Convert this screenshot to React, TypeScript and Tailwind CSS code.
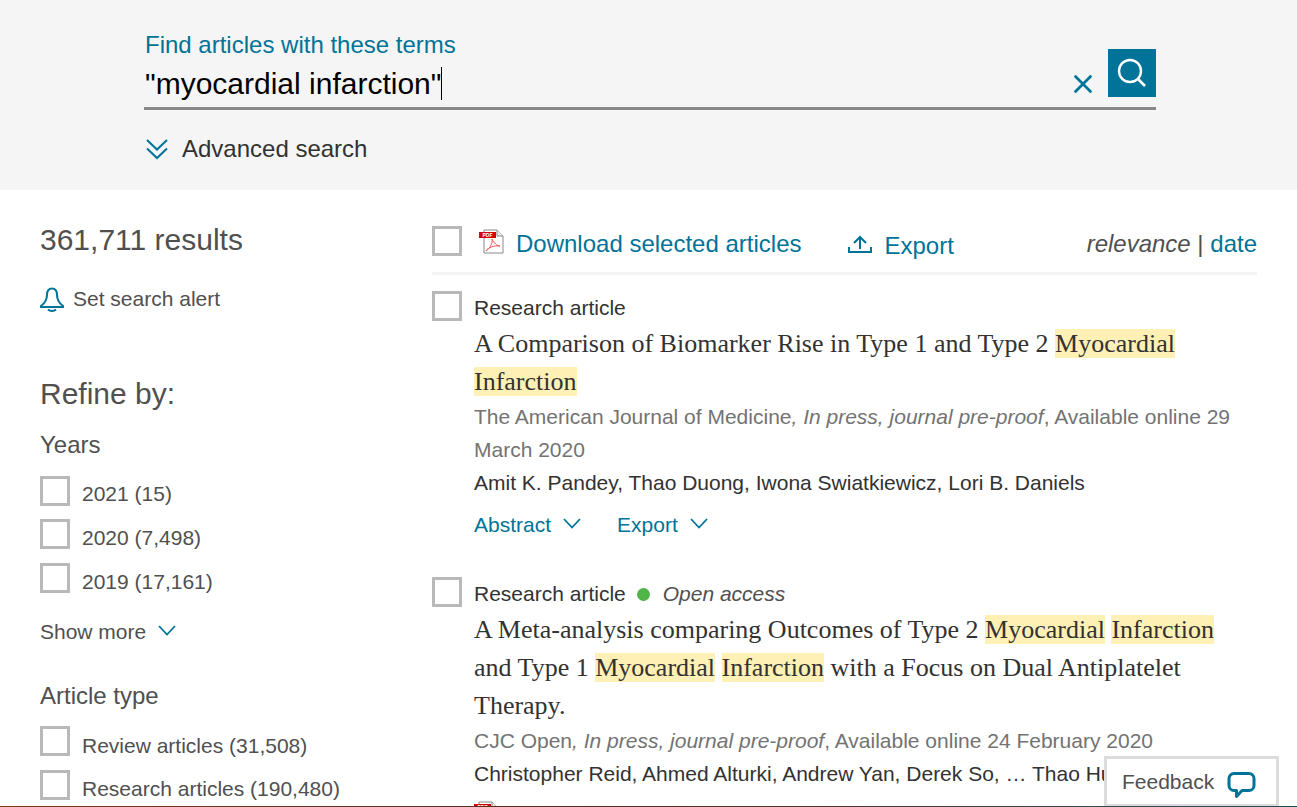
import { X } from 'lucide-react';

const sans = "font-['Liberation_Sans',Arial,sans-serif]";
const serif = "font-['Liberation_Serif','Times_New_Roman',serif]";

function Box({ className = '' }: { className?: string }) {
  return <span className={`block w-[30px] h-[30px] shrink-0 border-[3px] border-[#b9b9b9] bg-white ${className}`} />;
}

function Mark({ children }: { children: string }) {
  return <span className="bg-[#fff0b5]">{children}</span>;
}

function Chevron({ className = '' }: { className?: string }) {
  return (
    <svg viewBox="0 0 18 11" className={`w-[18px] h-[11px] shrink-0 text-[#007398] ${className}`}>
      <path d="M1 1l8 8.5L17 1" fill="none" stroke="currentColor" strokeWidth="1.8" />
    </svg>
  );
}

function PdfIcon({ className = '' }: { className?: string }) {
  return (
    <svg viewBox="0 0 25 25" className={className}>
      <path d="M5 1h13l6 6v17H5z" fill="#fff" stroke="#8a8a8a" strokeWidth="1" />
      <path d="M18 1v6h6" fill="#eee" stroke="#8a8a8a" strokeWidth="1" />
      <rect x="0" y="3" width="17" height="6" fill="#d50000" />
      <text x="8.5" y="8" textAnchor="middle" fontSize="5" fontWeight="700" fill="#fff" fontFamily="Liberation Sans, sans-serif">PDF</text>
      <path d="M13 10c1 5-3 10-6 12 1-3 9-6 14-5-3 0-6-3-8-7z" fill="none" stroke="#f25a5a" strokeWidth="1" />
    </svg>
  );
}

function FilterRow({ label, className = '', textClass = 'mt-[4px]' }: { label: string; className?: string; textClass?: string }) {
  return (
    <div className={`flex items-start h-[30px] ${className}`}>
      <Box />
      <span className={`ml-[12px] text-[21px] leading-[30px] whitespace-nowrap text-[#505050] ${textClass}`}>{label}</span>
    </div>
  );
}

function ToggleLink({ label, className = '' }: { label: string; className?: string }) {
  return (
    <span className={`flex items-center text-[21px] leading-[30px] text-[#007398] ${className}`}>
      {label}
      <Chevron className="ml-[12px] mb-[3px]" />
    </span>
  );
}

export default function App() {
  return (
    <div className={`relative h-[807px] overflow-hidden bg-white ${sans}`}>
      {/* search band */}
      <div className="h-[190px] bg-[#f5f5f5] pl-[144px] pr-[141px] pt-[31px]">
        <div className="text-[24px] leading-[28px] text-[#007398] pl-px">Find articles with these terms</div>
        <div className="flex items-end h-[51px] border-b-[3px] border-[#888888]">
          <span className="text-[30px] leading-[40px] text-black pb-[3px] pl-px">"myocardial infarction"</span>
          <span className="w-px h-[33px] bg-black mb-[7px]" />
          <div className="ml-auto flex items-end">
            <X className="w-[30px] h-[30px] text-[#007398] mb-[8px] mr-[10px]" strokeWidth={2.2} />
            <div className="mb-[10px] w-[48px] h-[48px] bg-[#007398]">
              <svg viewBox="0 0 48 48" className="w-[48px] h-[48px]">
                <circle cx="22" cy="22" r="11" fill="none" stroke="#fff" strokeWidth="2.4" />
                <path d="M30 30l7 7" stroke="#fff" strokeWidth="2.6" />
              </svg>
            </div>
          </div>
        </div>
        <div className="mt-[24px] flex items-center">
          <svg viewBox="0 0 24 22" className="ml-px w-[24px] h-[22px] text-[#007398]">
            <path d="M2 2l10 9.5L22 2M2 10.5l10 9.5 10-9.5" fill="none" stroke="currentColor" strokeWidth="2" />
          </svg>
          <span className="ml-[13px] text-[24px] leading-[30px] text-[#323232]">Advanced search</span>
        </div>
      </div>

      <div className="flex pl-[40px] pr-[40px]">
        {/* refine column */}
        <aside className="w-[392px] shrink-0">
          <div className="mt-[32px] text-[30px] leading-[36px] text-[#505050]">361,711 results</div>
          <div className="mt-[27px] flex items-center">
            <svg viewBox="0 0 24 25" className="w-[24px] h-[25px] text-[#007398]">
              <path d="M7 8C7 3 9 1.5 12 1.5S17 3 17 8c0 5 2 8 6 11v1H1v-1c4-3 6-6 6-11z" fill="none" stroke="currentColor" strokeWidth="2" />
              <path d="M8 22.5c2 2 6 2 8 0" fill="none" stroke="currentColor" strokeWidth="2" />
            </svg>
            <span className="ml-[9px] text-[21px] leading-[28px] text-[#505050]">Set search alert</span>
          </div>
          <div className="mt-[63px] text-[30px] leading-[36px] text-[#505050]">Refine by:</div>
          <div className="mt-[19px] text-[24px] leading-[28px] text-[#505050]">Years</div>
          <FilterRow label="2021 (15)" className="mt-[17px]" textClass="mt-[3px]" />
          <FilterRow label="2020 (7,498)" className="mt-[13px]" />
          <FilterRow label="2019 (17,161)" className="mt-[14px]" />
          <div className="mt-[25px] flex items-center text-[21px] leading-[28px] text-[#505050]">
            Show more
            <Chevron className="ml-[12px] mb-[3px]" />
          </div>
          <div className="mt-[36px] text-[24px] leading-[28px] text-[#505050]">Article type</div>
          <FilterRow label="Review articles (31,508)" className="mt-[16px]" textClass="mt-[5px]" />
          <FilterRow label="Research articles (190,480)" className="mt-[14px]" />
        </aside>

        {/* results column */}
        <main className="flex-1 min-w-0">
          <div className="flex items-start h-[85px] border-b-[3px] border-[#f5f5f5]">
            <Box className="mt-[36px]" />
            <PdfIcon className="ml-[17px] mt-[39px] w-[25px] h-[25px]" />
            <span className="ml-[12px] mt-[39px] text-[24px] leading-[30px] text-[#007398]">Download selected articles</span>
            <svg viewBox="0 0 24 20" className="ml-[47px] mt-[45px] w-[24px] h-[20px] text-[#007398]">
              <path d="M1 12v5h22v-5" fill="none" stroke="currentColor" strokeWidth="2" />
              <path d="M12 14V2M6 8l6-6 6 6" fill="none" stroke="currentColor" strokeWidth="2" />
            </svg>
            <span className="ml-[12px] mt-[41px] text-[24px] leading-[30px] text-[#007398]">Export</span>
            <span className="ml-auto mt-[39px] text-[24px] leading-[30px] text-[#505050]">
              <i>relevance</i> | <span className="text-[#007398]">date</span>
            </span>
          </div>

          <article className="flex mt-[16px]">
            <Box />
            <div className="ml-[12px] min-w-0">
              <div className="mt-[2px] text-[21px] leading-[30px] text-[#323232]">Research article</div>
              <h2 className={`${serif} font-normal mt-[2px] text-[26px] leading-[38px] text-[#323232]`}>
                A Comparison of Biomarker Rise in Type 1 and Type 2 <Mark>Myocardial</Mark> <Mark>Infarction</Mark>
              </h2>
              <p className="-mt-px text-[21px] leading-[33px] text-[#737373]">
                The American Journal of Medicine<i>, In press, journal pre-proof</i>, Available online 29 March 2020
              </p>
              <p className="text-[21px] leading-[33px] text-[#323232]">Amit K. Pandey, Thao Duong, Iwona Swiatkiewicz, Lori B. Daniels</p>
              <div className="mt-[11px] flex">
                <ToggleLink label="Abstract" />
                <ToggleLink label="Export" className="ml-[36px]" />
              </div>
            </div>
          </article>

          <article className="flex mt-[37px]">
            <Box />
            <div className="ml-[12px] min-w-0">
              <div className="mt-[2px] flex items-center text-[21px] leading-[30px] text-[#323232]">
                Research article
                <span className="ml-[11px] w-[13px] h-[13px] rounded-full bg-[#4fb548]" />
                <i className="ml-[13px] text-[#505050]">Open access</i>
              </div>
              <h2 className={`${serif} font-normal mt-[2px] text-[26px] leading-[38px] text-[#323232]`}>
                A Meta-analysis comparing Outcomes of Type 2 <Mark>Myocardial</Mark> <Mark>Infarction</Mark> and Type 1 <Mark>Myocardial</Mark> <Mark>Infarction</Mark> with a Focus on Dual Antiplatelet Therapy.
              </h2>
              <p className="-mt-px text-[21px] leading-[33px] text-[#737373]">
                CJC Open<i>, In press, journal pre-proof</i>, Available online 24 February 2020
              </p>
              <p className="text-[21px] leading-[33px] text-[#323232] whitespace-nowrap">Christopher Reid, Ahmed Alturki, Andrew Yan, Derek So, … Thao Huynh</p>
              <PdfIcon className="mt-[11px] w-[25px] h-[25px]" />
            </div>
          </article>
        </main>
      </div>

      {/* feedback tab */}
      <div className="absolute left-[1104px] top-[756px] w-[175px] h-[51px] flex items-start border-[3px] border-[#dcdcdc] bg-white pl-[15px]">
        <span className="mt-[9px] text-[21px] leading-[28px] text-[#505050]">Feedback</span>
        <svg viewBox="0 0 30 28" className="ml-[12px] mt-[12px] w-[30px] h-[28px] text-[#007398]">
          <path d="M8 2.5h15a5 5 0 0 1 5 5v7a5 5 0 0 1-5 5h-7l-5.5 6v-6H8a5 5 0 0 1-5-5v-7a5 5 0 0 1 5-5z" fill="none" stroke="currentColor" strokeWidth="3" strokeLinejoin="round" />
        </svg>
      </div>
      <div className="absolute left-0 right-0 bottom-0 h-px bg-gradient-to-r from-[#7a3b10] via-[#5a2a20] to-[#12525f]" />
    </div>
  );
}
